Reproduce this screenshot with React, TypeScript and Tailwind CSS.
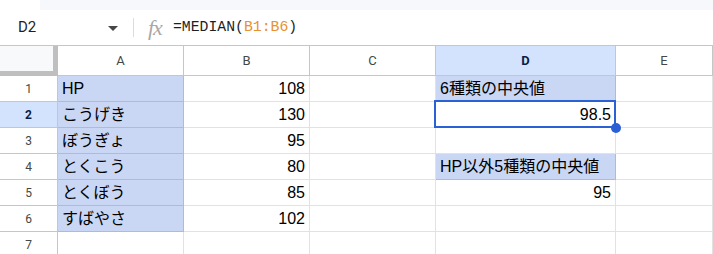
import React from 'react';

const cellFont = { fontFamily: '"Liberation Sans", "Noto Sans CJK JP", sans-serif' };

type Cell = { text?: string; align?: 'left' | 'right'; blue?: boolean; selected?: boolean };

const rows: Cell[][] = [
  [{ text: 'HP', blue: true }, { text: '108', align: 'right' }, {}, { text: '6種類の中央値', blue: true }, {}],
  [{ text: 'こうげき', blue: true }, { text: '130', align: 'right' }, {}, { text: '98.5', align: 'right', selected: true }, {}],
  [{ text: 'ぼうぎょ', blue: true }, { text: '95', align: 'right' }, {}, {}, {}],
  [{ text: 'とくこう', blue: true }, { text: '80', align: 'right' }, {}, { text: 'HP以外5種類の中央値', blue: true }, {}],
  [{ text: 'とくぼう', blue: true }, { text: '85', align: 'right' }, {}, { text: '95', align: 'right' }, {}],
  [{ text: 'すばやさ', blue: true }, { text: '102', align: 'right' }, {}, {}, {}],
  [{}, {}, {}, {}, {}],
];

const cols = ['A', 'B', 'C', 'D', 'E'];

const FormulaBar: React.FC = () => (
  <div className="h-[36px] flex items-center border-b border-[#c4c7c5] bg-white">
    <div className="w-[133px] flex items-center pl-[18px] pr-[15px] justify-between">
      <span className="text-[15px] text-[#1f1f1f]" style={{ fontFamily: 'Roboto, sans-serif' }}>D2</span>
      <svg width="10" height="5" viewBox="0 0 10 5" className="mt-[1px]">
        <path d="M0 0 L10 0 L5 5 Z" fill="#444746" />
      </svg>
    </div>
    <div className="w-px h-[19px] bg-[#dadce0]" />
    <span
      className="ml-[14px] text-[22px] italic text-[#a8a8a8] leading-none tracking-[-1px]"
      style={{ fontFamily: '"Liberation Serif", serif' }}
    >
      fx
    </span>
    <span className="ml-[11px] text-[14.8px] text-[#1f1f1f]" style={{ fontFamily: '"Liberation Mono", monospace' }}>
      =MEDIAN(<span className="text-[#e8912d]">B1:B6</span>)
    </span>
  </div>
);

const App: React.FC = () => {
  return (
    <div className="w-[713px] h-[254px] overflow-hidden bg-white">
      <div className="h-[10px] ml-[40px] bg-[#f6f8fc]" />
      <FormulaBar />
      <div className="grid grid-cols-[58px_126px_126px_126px_180px_1fr] grid-rows-[30px_repeat(7,26px)]">
        {/* corner */}
        <div className="bg-[#f8f9fa] border-r-[5px] border-b-[5px] border-[#bfbfbf]" />
        {cols.map((c) => (
          <div
            key={c}
            className={`flex items-center justify-center border-r border-b border-[#c4c7c5] text-[13px] ${
              c === 'D' ? 'bg-[#d3e3fd] text-[#0b1e49] font-bold' : 'bg-white text-[#444746]'
            }`}
            style={{ fontFamily: 'Roboto, sans-serif' }}
          >
            {c}
          </div>
        ))}
        {rows.map((row, r) => (
          <React.Fragment key={r}>
            <div
              className={`flex items-center justify-center border-r border-b border-[#c4c7c5] text-[12px] ${
                r === 1 ? 'bg-[#d3e3fd] text-[#0b1e49] font-bold' : 'bg-white text-[#444746]'
              }`}
              style={{ fontFamily: 'Roboto, sans-serif' }}
            >
              {r + 1}
            </div>
            {row.map((cell, ci) => (
              <div
                key={ci}
                className={`relative flex items-center px-[4px] border-r border-b text-[16px] text-black whitespace-nowrap ${
                  cell.blue ? 'bg-[#c9d7f5] border-[#adbbdb]' : 'bg-white border-[#e1e3e1]'
                } ${cell.align === 'right' ? 'justify-end' : 'justify-start'} ${cell.selected ? 'z-10' : ''}`}
                style={cellFont}
              >
                {cell.text}
                {cell.selected && (
                  <>
                    <div className="absolute -left-[2px] -top-[2px] right-[-1px] bottom-[-1px] border-2 border-[#2a62d6] pointer-events-none" />
                    <div className="absolute right-[-6px] bottom-[-6px] w-[10px] h-[10px] rounded-full bg-[#2a5fd6]" />
                  </>
                )}
              </div>
            ))}
          </React.Fragment>
        ))}
      </div>
    </div>
  );
};

export default App;
